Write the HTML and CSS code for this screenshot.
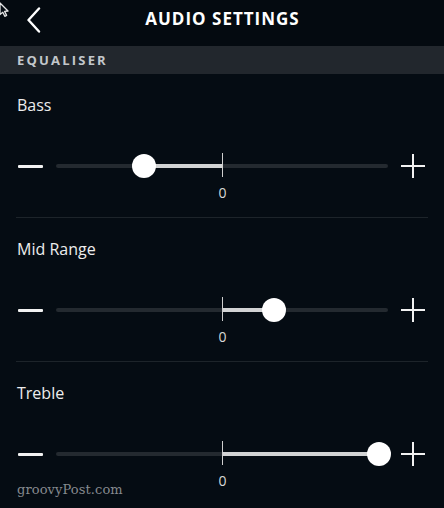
FILE: index.html
```html
<!DOCTYPE html>
<html lang="en">
<head>
<meta charset="utf-8">
<title>Audio Settings</title>
<link rel="stylesheet" href="styles.css">
</head>
<body>
<div class="screen">
  <svg class="cursor" width="10" height="18" viewBox="0 0 10 18"><path d="M0 3 L8 11 L4.6 11.4 L6.6 15.4 L4.8 16.3 L2.8 12.3 L0 14.6 Z" fill="#050c13" stroke="#e6e6e6" stroke-width="1.3" stroke-linejoin="round"/></svg>
  <header class="topbar">
    <svg class="back" width="16" height="26" viewBox="0 0 16 26"><path d="M13 1.5 L2.5 13 L13 24.5" fill="none" stroke="#ffffff" stroke-width="2.4" stroke-linecap="round" stroke-linejoin="round"/></svg>
    <h1 class="title">AUDIO SETTINGS</h1>
  </header>
  <div class="section-bar">EQUALISER</div>

  <section class="band">
    <div class="band-label">Bass</div>
    <div class="slider-row">
      <span class="minus"></span>
      <div class="track">
        <div class="fill" style="left:26.4%;width:23.6%"></div>
        <div class="tick"></div>
        <div class="thumb" style="left:26.4%"></div>
      </div>
      <span class="plus"></span>
    </div>
    <div class="zero">0</div>
  </section>

  <section class="band">
    <div class="band-label">Mid Range</div>
    <div class="slider-row">
      <span class="minus"></span>
      <div class="track">
        <div class="fill" style="left:50%;width:15.7%"></div>
        <div class="tick"></div>
        <div class="thumb" style="left:65.7%"></div>
      </div>
      <span class="plus"></span>
    </div>
    <div class="zero">0</div>
  </section>

  <section class="band band-last">
    <div class="band-label">Treble</div>
    <div class="slider-row">
      <span class="minus"></span>
      <div class="track">
        <div class="fill" style="left:50%;width:47.3%"></div>
        <div class="tick"></div>
        <div class="thumb" style="left:97.3%"></div>
      </div>
      <span class="plus"></span>
    </div>
    <div class="zero">0</div>
  </section>

  <div class="watermark">groovyPost.com</div>
</div>
</body>
</html>
```

FILE: styles.css
```css
* { box-sizing: border-box; }
html, body {
  margin: 0;
  padding: 0;
  background: #050c13;
}
body {
  font-family: "Open Sans", "Noto Sans", sans-serif;
  color: #ececec;
  width: 444px;
  height: 508px;
  overflow: hidden;
}
.screen {
  position: relative;
  width: 444px;
  height: 508px;
  background: #050c13;
}
.cursor {
  position: absolute;
  left: 0;
  top: 0;
  z-index: 2;
}
.topbar {
  height: 46px;
  display: flex;
  align-items: center;
  justify-content: center;
  position: relative;
  background: #040a10;
}
.back {
  position: absolute;
  left: 26px;
  top: 7px;
}
.title {
  margin: 0;
  font-size: 17px;
  font-weight: 700;
  letter-spacing: 1px;
  color: #ffffff;
  line-height: 20px;
  margin-top: -8px;
  padding-left: 1px;
}
.section-bar {
  height: 28px;
  background: #22272d;
  color: #c3c7cb;
  font-size: 13px;
  font-weight: 700;
  letter-spacing: 2.2px;
  line-height: 28px;
  padding-left: 17px;
}
.band {
  height: 144px;
  margin: 0 16px;
  border-bottom: 1px solid #1d242a;
  padding-top: 21px;
}
.band-last {
  border-bottom: none;
}
.band-label {
  font-size: 16px;
  line-height: 20px;
  color: #ededed;
  padding-left: 1px;
}
.slider-row {
  margin-top: 39px;
  height: 24px;
  display: flex;
  align-items: center;
}
.minus {
  width: 25px;
  height: 3px;
  background: #f2f2f2;
  border-radius: 1px;
  margin-left: 2px;
}
.track {
  position: relative;
  margin-left: 13px;
  width: 332px;
  height: 4px;
  border-radius: 2px;
  background: #242a30;
}
.fill {
  position: absolute;
  top: 0;
  height: 4px;
  background: #d2d3d4;
}
.tick {
  position: absolute;
  left: 50%;
  top: -11px;
  width: 1px;
  height: 24px;
  margin-left: -0.5px;
  background: #cfcfcf;
}
.thumb {
  position: absolute;
  top: 50%;
  width: 24px;
  height: 24px;
  margin: -12px 0 0 -12px;
  border-radius: 50%;
  background: #ffffff;
}
.plus {
  position: relative;
  width: 24px;
  height: 24px;
  margin-left: 13px;
}
.plus::before,
.plus::after {
  content: "";
  position: absolute;
  background: #f2f2f2;
}
.plus::before {
  left: 0;
  top: 11px;
  width: 24px;
  height: 2px;
}
.plus::after {
  left: 11px;
  top: 0;
  width: 2px;
  height: 24px;
}
.zero {
  margin-top: 6px;
  text-align: center;
  font-size: 14px;
  line-height: 17px;
  color: #d8d8d8;
  padding-left: 1px;
}
.watermark {
  position: absolute;
  left: 17px;
  top: 482px;
  font-family: "DejaVu Serif", "Liberation Serif", serif;
  font-size: 13px;
  color: #858a8f;
  letter-spacing: 0.1px;
}
```
